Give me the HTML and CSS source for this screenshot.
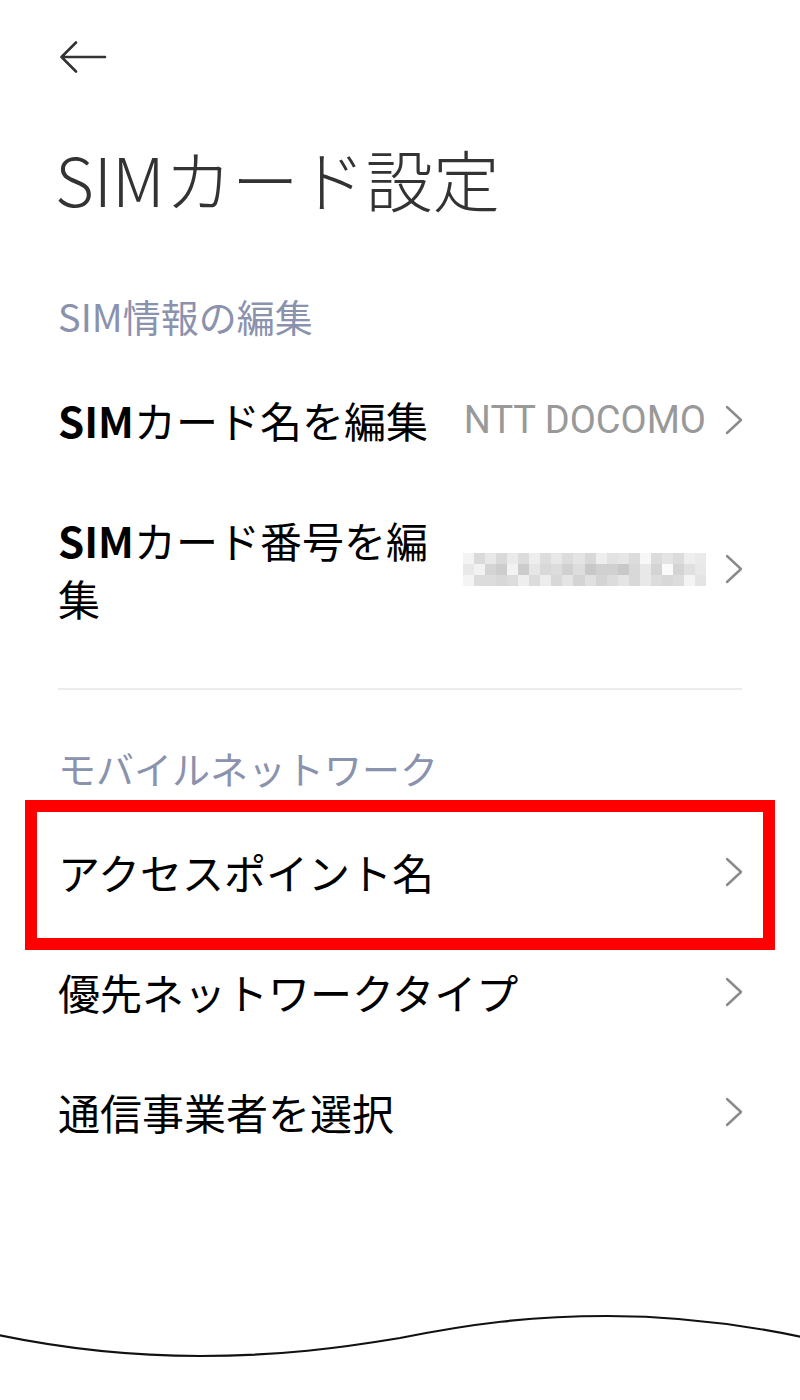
FILE: index.html
```html
<!DOCTYPE html>
<html lang="ja">
<head>
<meta charset="utf-8">
<title>SIMカード設定</title>
<link rel="stylesheet" href="styles.css">
</head>
<body>
<div class="page">
  <div class="topbar">
    <svg class="back" width="48" height="34" viewBox="0 0 48 34" aria-label="戻る">
      <path d="M46 16H2.5M17 1.5L2.5 16L17 30.5" fill="none" stroke="#333" stroke-width="2.6" stroke-linecap="round" stroke-linejoin="round"/>
    </svg>
  </div>

  <h1 class="title">SIMカード設定</h1>

  <div class="section-label">SIM情報の編集</div>

  <div class="row">
    <div class="row-title"><span class="latin-b">SIM</span>カード名を編集</div>
    <div class="row-value">NTT DOCOMO</div>
    <svg class="chev" width="18" height="30" viewBox="0 0 18 30"><path d="M2 2L16 15L2 28" fill="none" stroke="#8a8a8a" stroke-width="2.4" stroke-linecap="round" stroke-linejoin="round"/></svg>
  </div>

  <div class="row">
    <div class="row-title"><span class="latin-b">SIM</span>カード番号を編<br>集</div>
    <svg class="mosaic" width="243" height="33" viewBox="0 0 22 3" preserveAspectRatio="none" shape-rendering="crispEdges">
      <rect x="0" y="0" width="1" height="1" fill="#f3f3f3"/><rect x="1" y="0" width="1" height="1" fill="#dadada"/><rect x="2" y="0" width="1" height="1" fill="#e8e8e8"/><rect x="3" y="0" width="1" height="1" fill="#d9d9d9"/><rect x="4" y="0" width="1" height="1" fill="#eaeaea"/><rect x="5" y="0" width="1" height="1" fill="#dcdcdc"/><rect x="6" y="0" width="1" height="1" fill="#eeeeee"/><rect x="7" y="0" width="1" height="1" fill="#dddddd"/><rect x="8" y="0" width="1" height="1" fill="#e8e8e8"/><rect x="9" y="0" width="1" height="1" fill="#dcdcdc"/><rect x="10" y="0" width="1" height="1" fill="#e4e4e4"/><rect x="11" y="0" width="1" height="1" fill="#d8d8d8"/><rect x="12" y="0" width="1" height="1" fill="#eeeeee"/><rect x="13" y="0" width="1" height="1" fill="#e2e2e2"/><rect x="14" y="0" width="1" height="1" fill="#e6e6e6"/><rect x="15" y="0" width="1" height="1" fill="#dcdcdc"/><rect x="16" y="0" width="1" height="1" fill="#f7f7f7"/><rect x="17" y="0" width="1" height="1" fill="#dcdcdc"/><rect x="18" y="0" width="1" height="1" fill="#e4e4e4"/><rect x="19" y="0" width="1" height="1" fill="#dcdcdc"/><rect x="20" y="0" width="1" height="1" fill="#eeeeee"/><rect x="21" y="0" width="1" height="1" fill="#eaeaea"/>
      <rect x="0" y="1" width="1" height="1" fill="#e8e8e8"/><rect x="1" y="1" width="1" height="1" fill="#f2f2f2"/><rect x="2" y="1" width="1" height="1" fill="#d4d4d4"/><rect x="3" y="1" width="1" height="1" fill="#cccccc"/><rect x="4" y="1" width="1" height="1" fill="#f2f2f2"/><rect x="5" y="1" width="1" height="1" fill="#cccccc"/><rect x="6" y="1" width="1" height="1" fill="#e6e6e6"/><rect x="7" y="1" width="1" height="1" fill="#d8d8d8"/><rect x="8" y="1" width="1" height="1" fill="#dcdcdc"/><rect x="9" y="1" width="1" height="1" fill="#d0d0d0"/><rect x="10" y="1" width="1" height="1" fill="#dddddd"/><rect x="11" y="1" width="1" height="1" fill="#c8c8c8"/><rect x="12" y="1" width="1" height="1" fill="#d0d0d0"/><rect x="13" y="1" width="1" height="1" fill="#d0d0d0"/><rect x="14" y="1" width="1" height="1" fill="#c8c8c8"/><rect x="15" y="1" width="1" height="1" fill="#d8d8d8"/><rect x="16" y="1" width="1" height="1" fill="#e8e8e8"/><rect x="17" y="1" width="1" height="1" fill="#d4d4d4"/><rect x="18" y="1" width="1" height="1" fill="#fafafa"/><rect x="19" y="1" width="1" height="1" fill="#d4d4d4"/><rect x="20" y="1" width="1" height="1" fill="#e0e0e0"/><rect x="21" y="1" width="1" height="1" fill="#e8e8e8"/>
      <rect x="0" y="2" width="1" height="1" fill="#f4f4f4"/><rect x="1" y="2" width="1" height="1" fill="#dcdcdc"/><rect x="2" y="2" width="1" height="1" fill="#dcdcdc"/><rect x="3" y="2" width="1" height="1" fill="#d8d8d8"/><rect x="4" y="2" width="1" height="1" fill="#dcdcdc"/><rect x="5" y="2" width="1" height="1" fill="#eeeeee"/><rect x="6" y="2" width="1" height="1" fill="#dcdcdc"/><rect x="7" y="2" width="1" height="1" fill="#ececec"/><rect x="8" y="2" width="1" height="1" fill="#d8d8d8"/><rect x="9" y="2" width="1" height="1" fill="#e4e4e4"/><rect x="10" y="2" width="1" height="1" fill="#d4d4d4"/><rect x="11" y="2" width="1" height="1" fill="#e0e0e0"/><rect x="12" y="2" width="1" height="1" fill="#d4d4d4"/><rect x="13" y="2" width="1" height="1" fill="#dcdcdc"/><rect x="14" y="2" width="1" height="1" fill="#e4e4e4"/><rect x="15" y="2" width="1" height="1" fill="#d8d8d8"/><rect x="16" y="2" width="1" height="1" fill="#e8e8e8"/><rect x="17" y="2" width="1" height="1" fill="#dcdcdc"/><rect x="18" y="2" width="1" height="1" fill="#d8d8d8"/><rect x="19" y="2" width="1" height="1" fill="#dcdcdc"/><rect x="20" y="2" width="1" height="1" fill="#f4f4f4"/><rect x="21" y="2" width="1" height="1" fill="#e4e4e4"/>
    </svg>
    <svg class="chev" width="18" height="30" viewBox="0 0 18 30"><path d="M2 2L16 15L2 28" fill="none" stroke="#8a8a8a" stroke-width="2.4" stroke-linecap="round" stroke-linejoin="round"/></svg>
  </div>

  <div class="divider"></div>

  <div class="section-label section-label-2">モバイルネットワーク</div>

  <div class="row highlight">
    <div class="row-title">アクセスポイント名</div>
    <svg class="chev" width="18" height="30" viewBox="0 0 18 30"><path d="M2 2L16 15L2 28" fill="none" stroke="#8a8a8a" stroke-width="2.4" stroke-linecap="round" stroke-linejoin="round"/></svg>
  </div>

  <div class="row">
    <div class="row-title">優先ネットワークタイプ</div>
    <svg class="chev" width="18" height="30" viewBox="0 0 18 30"><path d="M2 2L16 15L2 28" fill="none" stroke="#8a8a8a" stroke-width="2.4" stroke-linecap="round" stroke-linejoin="round"/></svg>
  </div>

  <div class="row">
    <div class="row-title">通信事業者を選択</div>
    <svg class="chev" width="18" height="30" viewBox="0 0 18 30"><path d="M2 2L16 15L2 28" fill="none" stroke="#8a8a8a" stroke-width="2.4" stroke-linecap="round" stroke-linejoin="round"/></svg>
  </div>
</div>

<div class="wave">
  <svg width="800" height="80" viewBox="0 0 800 80">
    <path d="M-2,35 C70,50 140,56 200,56 C280,56 340,48 400,38 C470,24 530,16 607,16 C680,16 740,24 802,37" fill="none" stroke="#111" stroke-width="2.2"/>
  </svg>
</div>
</body>
</html>
```

FILE: styles.css
```css
html, body {
  margin: 0;
  padding: 0;
  background: #ffffff;
}

body {
  font-family: "Noto Sans CJK JP", "Noto Sans", sans-serif;
  color: #000;
}

.page {
  padding: 0 58px;
}

.topbar {
  height: 120px;
  box-sizing: border-box;
  padding-top: 41px;
}

.back {
  display: block;
  margin-left: 1px;
}

.title {
  margin: 24px 0 0 -3px;
  font-size: 67px;
  line-height: 67px;
  font-weight: 300;
  color: #333;
  letter-spacing: 0;
}

.section-label {
  margin-top: 86px;
  font-size: 38px;
  line-height: 38px;
  color: #8a92ad;
}

.section-label-2 {
  margin-top: 59px;
}

.row {
  display: flex;
  align-items: center;
  padding: 31px 0;
  margin-top: 0;
}

.section-label + .row {
  margin-top: 25px;
}

.row-title {
  flex: 1 1 auto;
  min-width: 0;
  font-size: 42px;
  line-height: 58px;
  color: #000;
}

.latin-b {
  font-weight: 700;
}

.row-value {
  flex: none;
  margin-left: 28px;
  margin-right: 19px;
  font-family: Roboto, "Noto Sans", sans-serif;
  font-size: 38px;
  line-height: 58px;
  color: #999;
}

.mosaic {
  flex: none;
  display: block;
  margin-left: 28px;
  margin-right: 19px;
}

.chev {
  flex: none;
  display: block;
  margin-right: -1px;
}

.divider {
  margin-top: 30px;
  height: 2px;
  background: #ececec;
}

.highlight {
  position: relative;
}

.highlight::after {
  content: "";
  position: absolute;
  top: -12px;
  bottom: -18px;
  left: -33px;
  right: -33px;
  border: 12px solid #ff0000;
  pointer-events: none;
}

.wave {
  margin-top: 128px;
  line-height: 0;
}

.wave svg {
  display: block;
}
```
